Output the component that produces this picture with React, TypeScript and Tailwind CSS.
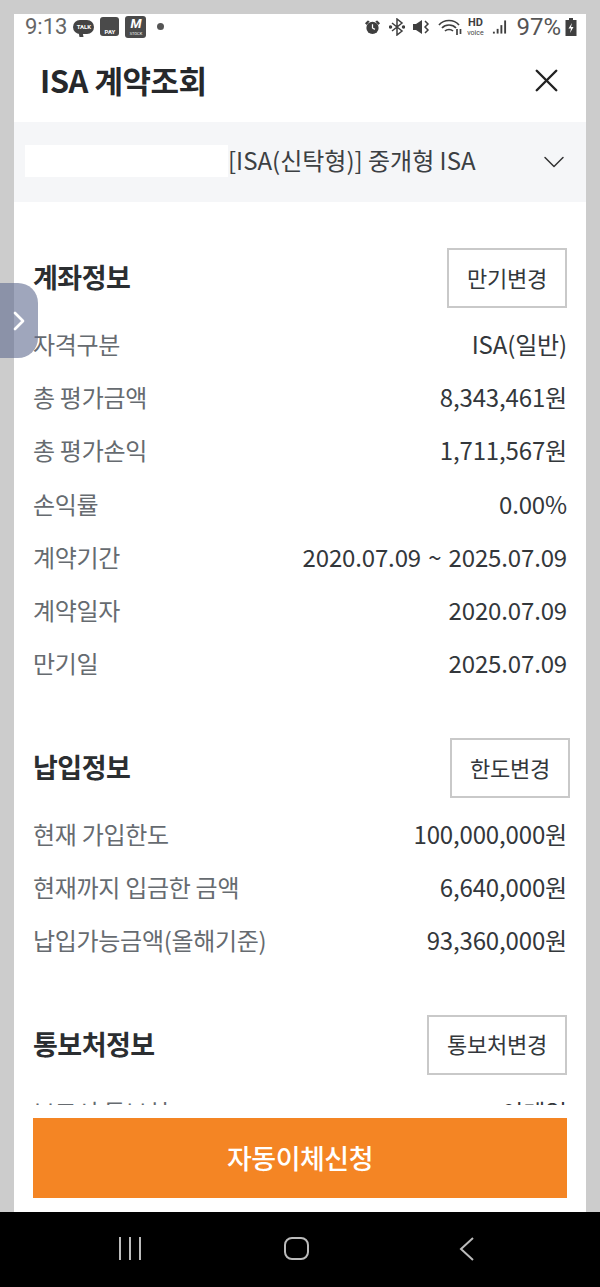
import { X, ChevronDown, ChevronRight } from "lucide-react";

const font = { fontFamily: '"Noto Sans CJK KR", "Noto Sans", sans-serif' };

const accountRows = [
  ["자격구분", "ISA(일반)"],
  ["총 평가금액", "8,343,461원"],
  ["총 평가손익", "1,711,567원"],
  ["손익률", "0.00%"],
  ["계약기간", "2020.07.09 ~ 2025.07.09"],
  ["계약일자", "2020.07.09"],
  ["만기일", "2025.07.09"],
];

const payRows = [
  ["현재 가입한도", "100,000,000원"],
  ["현재까지 입금한 금액", "6,640,000원"],
  ["납입가능금액(올해기준)", "93,360,000원"],
];

const Row = ({ label, value }: { label: string; value: string }) => (
  <div className="flex h-[53.3px] items-center justify-between">
    <span className="text-[24px] tracking-[-0.3px] text-[#666b70]">{label}</span>
    <span className="text-[24px] tracking-[-0.15px] text-[#33373b] [word-spacing:2px]">{value}</span>
  </div>
);

const Section = ({ title, action, w, mr = 0 }: { title: string; action: string; w: string; mr?: number }) => (
  <div className="flex h-[60px] items-center justify-between">
    <h3 className="pb-[1px] text-[27px] font-bold tracking-[-0.5px] text-[#2b2e31]">{title}</h3>
    <button className={`flex h-[60px] items-center justify-center border-2 border-[#c9c9c9] bg-white pb-[2px] text-[22px] tracking-[-0.2px] text-[#33373b] ${w}`} style={{ marginRight: mr }}>
      {action}
    </button>
  </div>
);

const StatusIcons = () => (
  <div className="flex items-center text-[#3f3f3f]">
    <svg width="17" height="18" viewBox="0 0 18 18" fill="currentColor"><circle cx="9" cy="10" r="6.500" /><path d="M1 5l3-3 2 1-3 4zM17 5l-3-3-2 1 3 4z" /><path d="M9 6v4l2.500 1.500" stroke="#fff" strokeWidth="1.300" fill="none" /></svg>
    <svg className="ml-[8px]" width="16" height="18" viewBox="0 0 16 18" fill="none" stroke="currentColor" strokeWidth="1.500"><path d="M3 5l10 8-5 4V1l5 4-10 8" /><circle cx="1.500" cy="9" r="1" fill="currentColor" /><circle cx="14.500" cy="9" r="1" fill="currentColor" /></svg>
    <svg className="ml-[7px]" width="19" height="18" viewBox="0 0 19 18" fill="currentColor"><path d="M1 6h3l6-4v14l-6-4H1z" /><path d="M13 3l3 3-3 3 3 3-3 3" stroke="currentColor" strokeWidth="1.500" fill="none" /></svg>
    <svg className="ml-[7px]" width="24" height="18" viewBox="0 0 24 18" fill="none" stroke="currentColor" strokeWidth="1.700"><path d="M1 7c5-6 15-6 20 0M4 10c3.500-4 10.500-4 14 0M7 13c2-2 6-2 8 0" /><path d="M19 11v6M22.500 16v-5" /></svg>
    <div className="ml-[4px] flex w-[18px] flex-col items-center" style={{ fontFamily: "Roboto, sans-serif" }}>
      <span className="text-[11px] font-bold leading-[12px]">HD</span>
      <span className="text-[7px] leading-[8px]">voice</span>
    </div>
    <svg className="ml-[8px]" width="15" height="18" viewBox="0 0 16 16" fill="currentColor"><rect x="1" y="13" width="2" height="2" /><rect x="5" y="10" width="2" height="5" /><rect x="9" y="6" width="2" height="9" /><rect x="13" y="1" width="2" height="14" /></svg>
    <span className="ml-[9px] text-[24px] leading-none text-[#555]" style={{ fontFamily: "Roboto, sans-serif" }}>97%</span>
    <svg className="ml-[4px]" width="12" height="18" viewBox="0 0 11 18" fill="currentColor"><path d="M3.500 0h4v2H11v16H0V2h3.500z" /><path d="M6.500 5L3 10.500h2.500L4.500 15 8 9H5.500z" fill="#fff" /></svg>
  </div>
);

export default function App() {
  return (
    <div className="relative flex h-[1287px] w-[600px] flex-col overflow-hidden bg-[#cccccc]" style={font}>
      <div className="mx-[14px] mt-[14px] flex h-[1198px] flex-col bg-white">
        {/* status bar */}
        <div className="flex h-[25px] items-center justify-between pl-[11px] pr-[9px]">
          <div className="flex items-center gap-[6px]">
            <span className="text-[22px] leading-none text-[#666]" style={{ fontFamily: "Roboto, sans-serif" }}>9:13</span>
            <div className="relative flex h-[14px] w-[21px] items-center justify-center rounded-full bg-[#444]">
              <span className="text-[6px] font-bold leading-none text-white" style={{ fontFamily: "Roboto, sans-serif" }}>TALK</span>
              <div className="absolute -bottom-[3px] left-[6px] h-[5px] w-[4px] skew-x-12 bg-[#444]" />
            </div>
            <div className="flex h-[19px] w-[19px] items-end justify-center rounded-[3px] bg-[#4a4a4a] pb-[1px]">
              <span className="text-[6px] font-bold leading-none text-white" style={{ fontFamily: "Roboto, sans-serif" }}>PAY</span>
            </div>
            <div className="flex h-[22px] w-[21px] flex-col items-center justify-center rounded-[3px] bg-[#4a4a4a]" style={{ fontFamily: "Roboto, sans-serif" }}>
              <span className="text-[13px] font-bold italic leading-[15px] text-white">M</span>
              <span className="text-[4px] leading-[6px] text-white">STOCK</span>
            </div>
            <div className="ml-[5px] h-[7px] w-[7px] rounded-full bg-[#555]" />
          </div>
          <StatusIcons />
        </div>

        {/* title */}
        <div className="flex h-[83px] items-center justify-between pl-[26px] pr-[20px]">
          <h1 className="pb-[1px] text-[31px] font-bold tracking-[-0.5px] text-[#26282b]">ISA 계약조회</h1>
          <X size={39} strokeWidth={1.5} className="text-[#222]" />
        </div>

        {/* account select */}
        <div className="flex h-[80px] items-center bg-[#f5f6f8] pl-[11px] pr-[14px]">
          <div className="mb-[2px] h-[32px] w-[203px] bg-white" />
          <span className="pb-[4px] text-[24px] text-[#3c4043]">[ISA(신탁형)] 중개형 ISA</span>
          <ChevronDown size={36} strokeWidth={1} className="ml-auto text-[#333]" />
        </div>

        {/* details */}
        <div className="h-[904px] overflow-hidden px-[19px]">
          <div className="mt-[46px]">
            <Section title="계좌정보" action="만기변경" w="w-[120px]" />
            <div className="mt-[9px]">
              {accountRows.map(([l, v]) => <Row key={l} label={l} value={v} />)}
            </div>
          </div>
          <div className="mt-[48px]">
            <Section title="납입정보" action="한도변경" w="w-[120px]" mr={-3} />
            <div className="mt-[9px]">
              {payRows.map(([l, v]) => <Row key={l} label={l} value={v} />)}
            </div>
          </div>
          <div className="mt-[48px]">
            <Section title="통보처정보" action="통보처변경" w="w-[140px]" />
            <div className="mt-[10px]">
              <Row label="보고서 통보처" value="이메일" />
            </div>
          </div>
        </div>

        {/* cta */}
        <div className="absolute left-[14px] top-[1105px] h-[107px] w-[572px] bg-white px-[19px] pt-[13px]">
          <button className="flex h-[80px] w-full items-center justify-center bg-[#f48524] text-[27px] font-medium tracking-[-0.5px] text-white">
            자동이체신청
          </button>
        </div>
      </div>

      {/* side handle */}
      <div className="absolute left-0 top-[283px] flex h-[75px] w-[38px] items-center justify-center rounded-r-[20px] bg-[#5f6b8f]/60">
        <ChevronRight size={32} strokeWidth={2} className="text-white" />
      </div>

      {/* nav bar */}
      <div className="flex flex-1 items-center justify-between bg-black pb-[2px] pl-[119px] pr-[126px]">
        <div className="flex gap-[8px]">
          <div className="h-[23px] w-[2px] bg-[#bbb]" />
          <div className="h-[23px] w-[2px] bg-[#bbb]" />
          <div className="h-[23px] w-[2px] bg-[#bbb]" />
        </div>
        <div className="mr-[8px] h-[23px] w-[25px] rounded-[8px] border-2 border-[#bbb]" />
        <svg width="15" height="24" viewBox="0 0 15 24" fill="none" stroke="#bbb" strokeWidth="2"><path d="M14 1L2 12l12 11" /></svg>
      </div>
    </div>
  );
}
